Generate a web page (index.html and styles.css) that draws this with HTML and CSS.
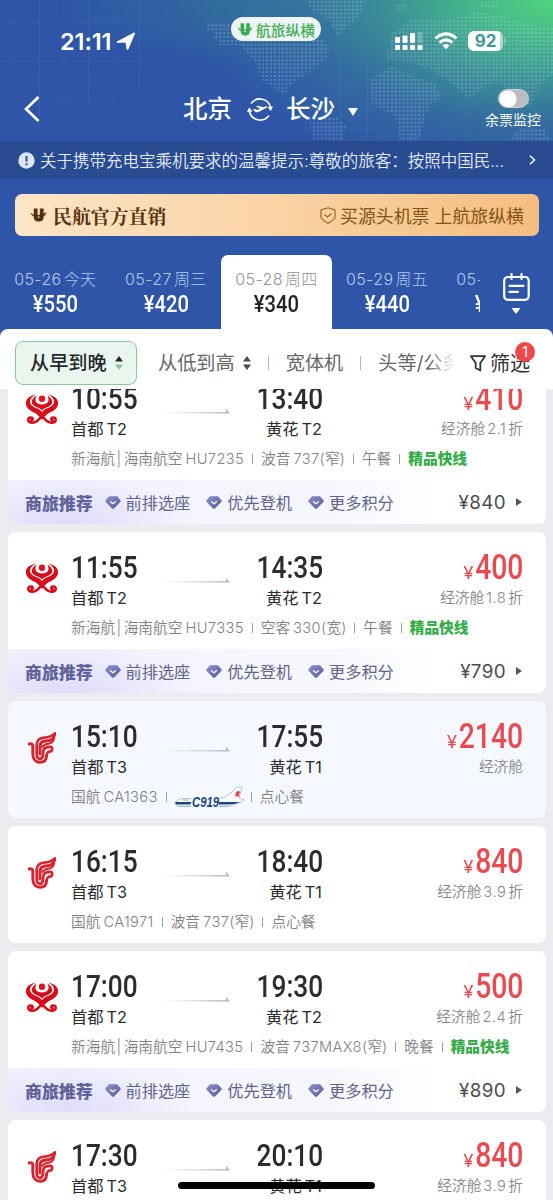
FILE: index.html
```
<!DOCTYPE html>
<html lang="zh-CN">
<head>
<meta charset="utf-8">
<title>北京 - 长沙</title>
<link rel="stylesheet" href="styles.css">
</head>
<body>
<svg class="defs" width="0" height="0" aria-hidden="true">
  <defs>
    <linearGradient id="gemFill" x1="0" y1="0" x2="1" y2="1"><stop offset="0" stop-color="#8f90ca"/><stop offset="1" stop-color="#5558a0"/></linearGradient>
    <linearGradient id="lineFade"><stop offset="0" stop-color="#c9ccd4" stop-opacity="0.1"/><stop offset="1" stop-color="#b2b6c2"/></linearGradient>
    <symbol id="hainan" viewBox="0 0 32 30">
      <circle cx="16" cy="4.800" r="3.200" fill="#dc1620"/>
      <path fill="#d80d1b" d="M10 .5C-3 3 -3 13.500 7 18C11 19.500 14 22 16 25C18 22 21 19.500 25 18C35 13.500 35 3 22 .5C30 4 30 11 22 14C19 15 17 16.500 16 18C15 16.500 13 15 10 14C2 11 2 4 10 .5Z"/>
      <path fill="#d80d1b" d="M10.500 1.500C8 7 10 10 16 10.600C22 10 24 7 21.500 1.500C28.500 6 27.500 11.500 20.500 13.400C18 14.200 16.500 15.200 16 16.600C15.500 15.200 14 14.200 11.500 13.400C4.500 11.500 3.500 6 10.500 1.500Z"/>
      <path fill="#d80d1b" d="M5 16.500Q12 18 16 22.500Q20 18 27 16.500Q20 19.500 16 26Q12 19.500 5 16.500Z"/>
      <path d="M14.500 23.500C11 28 8 29.300 4.800 28.600C1.300 27.600 1.500 23.500 4.800 23.500C7.300 23.500 7.300 26.200 5.300 26.300M17.500 23.500C21 28 24 29.300 27.200 28.600C30.700 27.600 30.500 23.500 27.200 23.500C24.700 23.500 24.700 26.200 26.700 26.300" fill="none" stroke="#d80d1b" stroke-width="2.500" stroke-linecap="round"/>
    </symbol>
    <symbol id="airchina" viewBox="0 0 28 32">
      <g fill="none" stroke="#d8232e" stroke-linecap="round" stroke-linejoin="round">
        <path d="M1 12C3.500 11.200 4.800 12 4.800 14V21.500C4.800 27.500 8 30.300 12 30.300C16.500 30.300 18.500 27.500 18.500 23.500" stroke-width="2.900"/>
        <path d="M8.700 13V22C8.700 25.500 10 26.800 12 26.800C15 26.800 15.200 23 15.200 20C15.200 16 18.500 14.600 22.500 14.800C25 15.300 24.500 19.500 22 19.500C20 19.500 19 20 18.700 24" stroke-width="2.700"/>
        <path d="M12 22V15C12 8.500 17 9 21 8.500C24 8 26 5.500 27 1.800" stroke-width="3"/>
        <path d="M8.800 12C9.500 5.500 15 6 19 5.300C23 4.600 25 3.300 27 1.500" stroke-width="2.500"/>
        <path d="M14.500 15C15.800 11.800 19 12 22 11.300C24 10.700 25.500 9 26 6.500" stroke-width="2"/>
      </g>
    </symbol>
    <symbol id="gem" viewBox="0 0 16 13">
      <path d="M4 .300H12L15.500 4.200C15.900 4.800 15.800 5.500 15.300 6L9 12.400Q8 13.200 7 12.400L.7 6C.2 5.500 .1 4.800 .5 4.200Z" fill="url(#gemFill)"/>
      <path d="M5.500 5.800L8 7.800L10.500 5.800" fill="none" stroke="#fff" stroke-width="1.300" stroke-linecap="round" stroke-linejoin="round"/>
    </symbol>
    <symbol id="route" viewBox="0 0 64 6">
      <path d="M0 4H60V.500L64 5.500H0Z" fill="url(#lineFade)"/>
    </symbol>
    <symbol id="sorter" viewBox="0 0 8 14">
      <path d="M4 0L8 5.500H0Z"/><path d="M4 14L8 8.500H0Z" fill="currentColor"/>
    </symbol>
    <symbol id="brand" viewBox="0 0 18 16">
      <path d="M4 1H8V9Q8 11 9.200 11Q10.400 11 10.400 9V1H14.500V9.500Q14.500 15 9.200 15Q4 15 4 9.500Z"/>
      <path d="M.5 5.500Q3 8.500 9 8Q15 7.500 17.500 4.500Q16.500 9 14 9.500H4Q1.500 9 .5 5.500Z"/>
    </symbol>
  </defs>
</svg>
<div class="screen">
  <header class="hero">
    <svg class="map" viewBox="0 0 553 141" width="553" height="141" aria-hidden="true">
      <defs>
        <pattern id="dots" width="3.900" height="3.900" patternUnits="userSpaceOnUse"><rect x=".7" y=".7" width="2.300" height="2.300" rx=".8" fill="#cfe6ff" opacity=".24"/></pattern>
      </defs>
      <path d="M14 0V120M39 0V125M64 0V130M89 0V110M114 0V115M139 0V90M0 22H140M0 61H150M0 80H140M20 100H115M341 45V141M367 60V141M420 90V141M470 100V141M300 128H380M330 86H370" stroke="#89b5e8" stroke-opacity=".11" fill="none"/>
      <path fill="url(#dots)" d="M207 24H276V0H306L312 10L330 20L337 37L350 25L360 14L366 0H306L276 0L276 24L276 90L262 80L255 62L240 45H218V38H213V30H207Z"/>
      <path fill="url(#dots)" d="M276 24H310L330 50L325 60L305 75L292 84L284 96L276 88ZM308 116H335L346 126L342 141H314ZM370 80L390 66L412 76L436 84L442 98L430 104L424 124L418 141H400L395 116L372 104ZM386 60L392 32L412 20H450L474 12L500 14L524 24L553 28V75L540 84L530 108L510 92L496 80L486 86L468 100L456 86L430 68L400 60ZM508 141L520 128H545L550 141ZM396 4H407V10H396ZM480 2H500V8H480Z"/>
    </svg>
    <div class="status">
      <div class="clock"><span>21:11</span>
        <svg width="20" height="19" viewBox="0 0 20 19"><path d="M1 9.500L17.500 .700Q19.500 .2 18.800 2L12.500 17Q11.500 19 10.500 17L9.700 11.300Q9.500 10.500 8.500 10.500L1.500 11Q0 10.500 1 9.500Z" fill="#fff"/></svg>
      </div>
      <div class="app-pill"><svg width="16" height="15" viewBox="0 0 18 16" fill="#3cab4c"><use href="#brand"/></svg><span>航旅纵横</span></div>
      <div class="radio">
        <svg width="28" height="19" viewBox="0 0 28 19" fill="#fff"><rect x="0" y="5" width="5" height="6" rx="1"/><rect x="7.500" y="3.500" width="5" height="7.500" rx="1"/><rect x="15" y="1" width="5" height="10" rx="1"/><rect x="22.500" y="0" width="5" height="11" rx="1" opacity=".25"/><rect x="0" y="13" width="5" height="5" rx="1"/><rect x="7.500" y="13" width="5" height="5" rx="1"/><rect x="15" y="13" width="5" height="5" rx="1"/><rect x="22.500" y="13" width="5" height="5" rx="1"/></svg>
        <svg width="24" height="18" viewBox="0 0 24 18" fill="none" stroke="#fff" stroke-width="3"><path d="M1.500 6.500Q12 -2.800 22.500 6.500"/><path d="M5.500 10.700Q12 5 18.500 10.700"/><path d="M8.500 13.500Q12 10.700 15.500 13.500L12 17.200Z" fill="#fff" stroke="none"/></svg>
        <span class="battery">92</span><i class="battery-cap"></i>
      </div>
    </div>
    <div class="nav">
      <svg class="back" width="16" height="26" viewBox="0 0 16 26"><path d="M14.500 1L2 13L14.500 25" fill="none" stroke="#fff" stroke-width="2.700"/></svg>
      <div class="title"><span>北京</span>
        <svg width="26" height="25" viewBox="0 0 26 25" fill="none" stroke="#fff" stroke-width="1.600"><path d="M4 6.500A11 11 0 0 1 23.700 11M22 18.500A11 11 0 0 1 2.300 14"/><path d="M20.500 10L26 9.500L23.800 14ZM0 15L2.200 10.500L5.500 14.500Z" fill="#fff" stroke="none"/><path d="M6 12.500L8 12L10.500 13L13 11.800L9 9.300L10.800 8.800L16.500 10.300L19 9.200Q21 9 20 10.500L12.500 14.500L9 15.500Z" fill="#fff" stroke="none"/></svg>
        <span>长沙</span><svg class="caret" width="10" height="8" viewBox="0 0 10 8"><path d="M0 0H10L5 8Z" fill="#fff"/></svg>
      </div>
      <div class="monitor"><i class="toggle"></i><span>余票监控</span></div>
    </div>
  </header>
  <div class="notice">
    <svg width="17" height="17" viewBox="0 0 17 17"><circle cx="8.500" cy="8.500" r="8.200" fill="#dbe5f7"/><path d="M8.500 4V9.500M8.500 11.200V13.200" stroke="#2b4c8c" stroke-width="2"/></svg>
    <span class="notice-text">关于携带充电宝乘机要求的温馨提示:尊敬的旅客：按照中国民...</span>
    <svg width="7" height="10" viewBox="0 0 7 10"><path d="M1 .7L5.500 5L1 9.300" fill="none" stroke="#fff" stroke-width="1.500"/></svg>
  </div>
  <div class="banner">
    <svg width="17" height="16" viewBox="0 0 18 16" fill="#56300a"><use href="#brand"/></svg>
    <strong>民航官方直销</strong>
    <svg class="shield" width="16" height="17" viewBox="0 0 16 17" fill="none" stroke="#966524" stroke-width="1.200"><path d="M8 .8L15 3V10Q15 12.500 8 16.200Q1 12.500 1 10V3Z"/><path d="M4.500 7.500L7.500 10L11.500 6.500"/></svg>
    <span>买源头机票 上航旅纵横</span>
  </div>
  <div class="dates">
    <div class="tabs">
      <div class="tab"><span class="day">05-26<b>今天</b></span><span class="fare">¥550</span></div>
      <div class="tab"><span class="day">05-27<b>周三</b></span><span class="fare">¥420</span></div>
      <div class="tab active"><span class="day">05-28<b>周四</b></span><span class="fare">¥340</span></div>
      <div class="tab"><span class="day">05-29<b>周五</b></span><span class="fare">¥440</span></div>
      <div class="tab"><span class="day">05-30<b>周六</b></span><span class="fare">¥430</span></div>
    </div>
    <div class="calendar">
      <svg width="27" height="28" viewBox="0 0 27 28" fill="none" stroke="#fff" stroke-width="2.200" stroke-linecap="round"><rect x="1.200" y="4" width="24.500" height="22.800" rx="3.500"/><path d="M8.500 1V6M18.500 1V6M6.500 12.800H20.500M6.500 18.800H15"/></svg>
      <svg width="10" height="6" viewBox="0 0 10 6"><path d="M.5 0H9.500L5 6Z" fill="#fff"/></svg>
    </div>
  </div>
  <div class="filters">
    <div class="sort on"><span>从早到晚</span><svg class="sorter" width="8" height="14"><use href="#sorter"/></svg></div>
    <div class="sort"><span>从低到高</span><svg class="sorter" width="8" height="14"><use href="#sorter"/></svg></div>
    <i class="bar"></i><span class="option">宽体机</span><i class="bar"></i><span class="option cut">头等/公务</span>
    <div class="filter"><svg width="16" height="17" viewBox="0 0 16 17"><path d="M1 1.200H15L10.300 8V15.500L5.700 13V8Z" fill="none" stroke="#333" stroke-width="1.800" stroke-linejoin="round"/></svg><span>筛选</span><em class="count">1</em></div>
  </div>
  <main class="list">
    <article class="card">
      <div class="body">
        <svg class="logo" width="32" height="30"><use href="#hainan"/></svg>
        <div class="dep"><b class="time">10:55</b><span class="port">首都<i>T2</i></span></div>
        <svg class="route" width="64" height="6"><use href="#route"/></svg>
        <div class="arr"><b class="time">13:40</b><span class="port">黄花<i>T2</i></span></div>
        <div class="cost"><b class="amount"><small>¥</small>410</b><span class="cabin">经济舱<i>2.1</i>折</span></div>
        <div class="meta"><span>新海航<em>|</em>海南航空<i>HU7235</i></span><span>波音<i>737(</i>窄)</span><span>午餐</span><span class="express">精品快线</span></div>
      </div>
      <div class="perks"><strong>商旅推荐</strong><span><svg width="16" height="13"><use href="#gem"/></svg>前排选座</span><span><svg width="16" height="13"><use href="#gem"/></svg>优先登机</span><span><svg width="16" height="13"><use href="#gem"/></svg>更多积分</span><b>¥840</b><i class="more"></i></div>
    </article>
    <article class="card">
      <div class="body">
        <svg class="logo" width="32" height="30"><use href="#hainan"/></svg>
        <div class="dep"><b class="time">11:55</b><span class="port">首都<i>T2</i></span></div>
        <svg class="route" width="64" height="6"><use href="#route"/></svg>
        <div class="arr"><b class="time">14:35</b><span class="port">黄花<i>T2</i></span></div>
        <div class="cost"><b class="amount"><small>¥</small>400</b><span class="cabin">经济舱<i>1.8</i>折</span></div>
        <div class="meta"><span>新海航<em>|</em>海南航空<i>HU7335</i></span><span>空客<i>330(</i>宽)</span><span>午餐</span><span class="express">精品快线</span></div>
      </div>
      <div class="perks"><strong>商旅推荐</strong><span><svg width="16" height="13"><use href="#gem"/></svg>前排选座</span><span><svg width="16" height="13"><use href="#gem"/></svg>优先登机</span><span><svg width="16" height="13"><use href="#gem"/></svg>更多积分</span><b>¥790</b><i class="more"></i></div>
    </article>
    <article class="card tinted">
      <div class="body">
        <svg class="logo" width="28" height="32"><use href="#airchina"/></svg>
        <div class="dep"><b class="time">15:10</b><span class="port">首都<i>T3</i></span></div>
        <svg class="route" width="64" height="6"><use href="#route"/></svg>
        <div class="arr"><b class="time">17:55</b><span class="port">黄花<i>T1</i></span></div>
        <div class="cost"><b class="amount"><small>¥</small>2140</b><span class="cabin">经济舱</span></div>
        <div class="meta"><span>国航<i>CA1363</i></span><span class="plane"><svg width="70" height="22" viewBox="0 0 70 22"><path d="M1 17Q4 12.500 10 12.500H46Q54 11 58 6L63 1H68L65 12L70 14Q66 18 54 20H5Q1 19.500 1 17Z" fill="#fff" stroke="#a6b5c6" stroke-width=".8"/><path d="M1 16H18L16 18.500H2ZM45 16H66Q61 18.500 53 18.500H44Z" fill="#17487d"/><path d="M5 20.500H55" stroke="#9fb0c0" stroke-width=".8"/><path d="M62 6Q65 4 66 6L64.500 11L61 10Z" fill="#e34b50"/><path d="M9 14H15" stroke="#7890a8" stroke-width=".8"/><path d="M18 10H45V21.500H17Z" fill="#f5f8fe"/><text class="jet" x="18" y="20.500" textLength="27" lengthAdjust="spacingAndGlyphs">C919</text></svg></span><span>点心餐</span></div>
      </div>
    </article>
    <article class="card">
      <div class="body">
        <svg class="logo" width="28" height="32"><use href="#airchina"/></svg>
        <div class="dep"><b class="time">16:15</b><span class="port">首都<i>T3</i></span></div>
        <svg class="route" width="64" height="6"><use href="#route"/></svg>
        <div class="arr"><b class="time">18:40</b><span class="port">黄花<i>T1</i></span></div>
        <div class="cost"><b class="amount"><small>¥</small>840</b><span class="cabin">经济舱<i>3.9</i>折</span></div>
        <div class="meta"><span>国航<i>CA1971</i></span><span>波音<i>737(</i>窄)</span><span>点心餐</span></div>
      </div>
    </article>
    <article class="card">
      <div class="body">
        <svg class="logo" width="32" height="30"><use href="#hainan"/></svg>
        <div class="dep"><b class="time">17:00</b><span class="port">首都<i>T2</i></span></div>
        <svg class="route" width="64" height="6"><use href="#route"/></svg>
        <div class="arr"><b class="time">19:30</b><span class="port">黄花<i>T2</i></span></div>
        <div class="cost"><b class="amount"><small>¥</small>500</b><span class="cabin">经济舱<i>2.4</i>折</span></div>
        <div class="meta"><span>新海航<em>|</em>海南航空<i>HU7435</i></span><span>波音<i>737MAX8(</i>窄)</span><span>晚餐</span><span class="express">精品快线</span></div>
      </div>
      <div class="perks"><strong>商旅推荐</strong><span><svg width="16" height="13"><use href="#gem"/></svg>前排选座</span><span><svg width="16" height="13"><use href="#gem"/></svg>优先登机</span><span><svg width="16" height="13"><use href="#gem"/></svg>更多积分</span><b>¥890</b><i class="more"></i></div>
    </article>
    <article class="card">
      <div class="body">
        <svg class="logo" width="28" height="32"><use href="#airchina"/></svg>
        <div class="dep"><b class="time">17:30</b><span class="port">首都<i>T3</i></span></div>
        <svg class="route" width="64" height="6"><use href="#route"/></svg>
        <div class="arr"><b class="time">20:10</b><span class="port">黄花<i>T1</i></span></div>
        <div class="cost"><b class="amount"><small>¥</small>840</b><span class="cabin">经济舱<i>3.9</i>折</span></div>
      </div>
    </article>
  </main>
  <div class="home"></div>
</div>
</body>
</html>
```
FILE: styles.css
```
* { box-sizing: border-box; }
body { margin: 0; font-family: Inter, "Noto Sans CJK SC", sans-serif; color: #2b2c30; }
i, em { font-style: normal; }
svg { flex: none; display: block; }
.defs { position: absolute; }
.screen { position: relative; width: 553px; height: 1200px; overflow: hidden; display: flex; flex-direction: column; background: #2e55a7; white-space: nowrap; }

.hero { position: relative; flex: none; height: 141px; color: #fff;
  background: radial-gradient(ellipse 370px 185px at 100% 0, #50d37c 0, #45b98a 20%, rgba(60,146,150,.95) 45%, rgba(54,116,158,.7) 68%, rgba(46,85,167,0) 100%), radial-gradient(ellipse 240px 70px at 290px 0, #337399, rgba(46,85,167,0)), #2e55a7; }
.map { position: absolute; inset: 0; }
.status { position: relative; height: 82px; padding: 0 49px 0 60px; display: flex; align-items: center; }
.clock { width: 171px; display: flex; align-items: center; gap: 5px; font-size: 23.500px; font-weight: 600; letter-spacing: -.1px; }
.app-pill { width: 90px; height: 24px; margin-bottom: 24px; border-radius: 12px; background: #eef5f7; color: #45ad53; display: flex; align-items: center; justify-content: center; gap: 3px; font-size: 14.700px; font-weight: 500; }
.radio { margin-left: auto; display: flex; align-items: center; }
.radio svg + svg { margin: 0 10px 0 11px; }
.battery { width: 35px; height: 20px; border-radius: 6px; background: linear-gradient(90deg, #fff 92%, #b7dccd 92%); color: #439795; display: flex; align-items: center; justify-content: center; font-size: 17px; font-weight: 700; }
.battery-cap { width: 2px; height: 6px; margin: 0 -2px 0 1px; background: #8dcaae; border-radius: 0 2px 2px 0; }
.nav { position: relative; height: 54px; display: flex; align-items: center; padding: 0 12px 0 24px; }
.title { margin-left: 143px; display: flex; align-items: center; font-size: 24.500px; font-weight: 500; line-height: 30px; }
.title svg { margin: 0 13px 0 15px; }
.title .caret { margin: 5px 0 0 13px; }
.monitor { margin-left: auto; display: flex; flex-direction: column; align-items: center; gap: 3px; font-size: 14px; line-height: 18px; }
.toggle { width: 31px; height: 19px; border-radius: 10px; background: radial-gradient(circle at 9px 9px, #fff 8px, #bdbdc0 9px); border: 1px solid #d0d3d5; }

.notice { flex: none; height: 38px; padding: 0 17px 0 18px; display: flex; align-items: center; gap: 5px; background: #294b92; color: #e2eaf8; font-size: 16.500px; font-weight: 350; }
.notice-text { flex: 1; }
.banner { flex: none; height: 42px; margin: 15px 14px 19px 15px; padding: 0 15px; border-radius: 7px; display: flex; align-items: center; background: linear-gradient(90deg, #fce5c7, #f9d3a4 50%, #f4be80); color: #845316; font-size: 17.900px; }
.banner strong { margin-left: 6px; font-family: "Noto Serif CJK SC", "Noto Sans CJK SC", serif; font-size: 18.900px; color: #56300a; }
.shield { margin: 0 4px 0 auto; }

.dates { flex: none; height: 74px; display: flex; color: #fff; }
.tabs { width: 480px; display: flex; overflow: hidden; }
.tab { flex: none; width: 110.600px; padding-top: 13px; display: flex; flex-direction: column; align-items: center; border-radius: 7px 7px 0 0; }
.day { font-size: 16px; line-height: 22px; color: #b5c8f0; font-weight: 300; letter-spacing: .4px; }
.day b { font-weight: 300; margin-left: 2px; }
.fare { font: 500 23.500px/28px Roboto, sans-serif; transform: scaleX(.86); }
.active { background: #fff; }
.active .day { color: #929297; }
.active .fare { color: #222327; }
.calendar { flex: 1; padding: 18px 1px 0 0; display: flex; flex-direction: column; align-items: center; gap: 7px; }

.filters { flex: none; height: 60px; padding: 8px 15px 0; display: flex; align-items: center; background: #fff; border-radius: 8px 8px 0 0; font-size: 19.200px; color: #66676b; }
.filters span { margin-top: -2px; }
.sort { height: 44px; display: flex; align-items: center; gap: 8px; padding: 0 13px 0 21px; }
.on { width: 122px; padding: 0 14px; border: 1px solid #8bc99b; border-radius: 8px; background: #eaf6ed; color: #25262a; font-weight: 500; }
.sorter { fill: #4b4c50; color: #4b4c50; }
.on .sorter { fill: #25262a; color: #92be9c; }
.bar { width: 1px; height: 14px; margin: 0 17px 0 4px; background: #b6b7bb; }
.option + .bar { margin-left: 17px; }
.cut { width: 77px; overflow: hidden; -webkit-mask-image: linear-gradient(90deg, #000 65%, transparent); mask-image: linear-gradient(90deg, #000 65%, transparent); }
.filter { position: relative; margin-left: auto; margin-right: 8px; display: flex; align-items: center; gap: 4px; font-size: 20px; color: #303135; }
.count { position: absolute; top: -8px; right: -5px; width: 20px; height: 20px; border-radius: 50%; background: #ef474b; color: #fff; font-size: 14px; line-height: 20px; text-align: center; }

.list { flex: 1; min-height: 0; overflow: hidden; padding: 0 7px 0 8px; background: #ebecf0; display: flex; flex-direction: column; gap: 8px; }
.card { flex: none; border-radius: 8px; background: #fff; overflow: hidden; }
.card:first-child { margin-top: -26px; }
.card:last-child { height: 117px; }
.tinted { background: #f5f8fe; }
.body { height: 117px; padding: 19px 23px 0 0; display: grid; grid-template-columns: 63px 95px 64px 93px 1fr; grid-template-rows: 60px 34px; }
.logo { justify-self: center; margin-top: 12px; margin-left: 4px; }
.dep, .arr, .cost { display: flex; flex-direction: column; align-items: flex-start; }
.arr, .cost { align-items: flex-end; }
.time { height: 34px; font: 500 32px/33px Roboto, sans-serif; transform: scaleX(.82); transform-origin: 0 50%; }
.arr .time { transform-origin: 100% 50%; }
.port { font-size: 16.300px; line-height: 26px; }
.port i { margin-left: 3px; }
.arr .port { margin-right: 1px; }
.route { margin-top: 26px; }
.amount { height: 34px; font: 500 34.500px/33px Roboto, sans-serif; color: #e94a50; transform: scaleX(.82); transform-origin: 100% 50%; }
.amount small { display: inline-block; font: 400 17.500px/20px Inter, sans-serif; transform: scaleX(1.300); transform-origin: 100% 50%; margin-right: 2px; }
.cabin { font-size: 14.700px; line-height: 28px; color: #85868a; font-weight: 350; }
.cabin i { margin: 0 2px; letter-spacing: .5px; }
.meta { grid-column: 2 / 6; display: flex; align-items: center; height: 33px; font-size: 14.700px; line-height: 22px; font-weight: 350; color: #808185; }
.meta i { margin-left: 3px; letter-spacing: .35px; }
.meta em { margin: 0 2.500px 0 1.500px; }
.meta span + span { display: flex; align-items: baseline; }
.meta span + span::before { content: ""; width: 1px; height: 10px; margin: 0 8px; background: #9a9b9f; }
.meta .plane { align-items: center; }
.meta .plane svg { margin: 0 -1px; }
.meta .express { color: #35ad49; font-weight: 800; }
.jet { font: italic 700 15.500px "Liberation Sans", sans-serif; fill: #17487d; }

.perks { height: 44px; padding: 0 23px 0 17px; display: flex; align-items: center; background: radial-gradient(ellipse 120px 50px at 60px 44px, #dedcfa, rgba(238,240,252,0)), linear-gradient(90deg, #f0f1fd, #f6f7fe 60%, #fff 80%); color: #62638c; font-size: 16.200px; }
.perks strong { font-size: 16.900px; font-weight: 800; color: #61629a; margin-right: 12px; }
.perks span { display: flex; align-items: center; gap: 5px; margin-right: 16px; }
.perks b { margin-left: auto; font-size: 18.800px; font-weight: 400; letter-spacing: .4px; color: #4c4d51; }
.more { margin: 0 1px 0 10px; border-left: 6px solid #55565a; border-top: 4.500px solid transparent; border-bottom: 4.500px solid transparent; }
.home { position: absolute; left: 178px; bottom: 11px; width: 197px; height: 7px; border-radius: 4px; background: #000; }
```
